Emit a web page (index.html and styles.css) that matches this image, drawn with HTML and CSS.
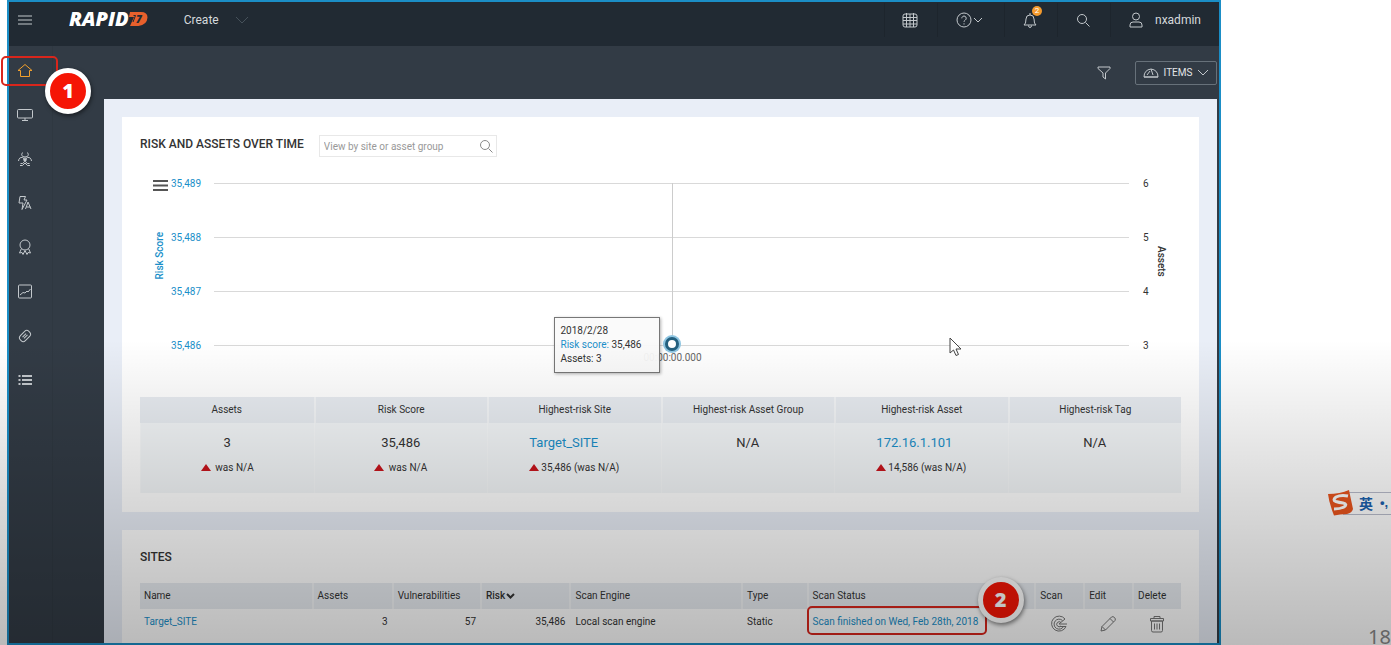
FILE: index.html
```html
<!DOCTYPE html>
<html lang="en">
<head>
  <meta charset="UTF-8">
  <title>Security Console</title>
  <meta name="viewport" content="width=device-width, initial-scale=1.0">
  <link rel="stylesheet" href="styles.css">
</head>
<body>
  <div class="app">
    <header class="topbar">
      <button class="menu-btn" aria-label="Menu">
        <svg class="icon" width="16" height="16" viewBox="0 0 16 16"><path d="M1 4h14M1 8h14M1 12h14"/></svg>
      </button>
      <a href="#" class="logo">RAPID<svg width="19" height="14" viewBox="0 0 19 14">
          <path d="M1 0h11q6.500 0 6.500 5.500Q18 13 9.500 14H1l4-9H0z" fill="#e8602c"/>
          <path d="M4.500 3.500h2L4 10" stroke="#212a33"/>
          <text x="7" y="11" class="logo-seven">7</text>
        </svg></a>
      <button class="create-btn">Create
        <svg class="icon dim" width="14" height="8" viewBox="0 0 14 8"><path d="M1 1l6 6 6-6"/></svg>
      </button>
      <nav class="tools">
        <button class="tool" aria-label="Calendar">
          <svg class="icon" width="16" height="16" viewBox="0 0 16 16"><rect x="1" y="2" width="14" height="13" rx="2"/><path d="M1 5.500h14M1 8.500h14M1 12h14M4.500 1v14M8 2v13M11.500 1v14"/></svg>
        </button>
        <button class="tool tool-help" aria-label="Help">
          <svg class="icon" width="27" height="16" viewBox="0 0 27 16"><circle cx="8" cy="8" r="7"/><path d="M5.800 6.300a2.200 2.200 0 1 1 3.400 1.800Q8 8.800 8 9.800M8 11.300v1.200M18 6l4 4 4-4"/></svg>
        </button>
        <button class="tool" aria-label="Notifications">
          <svg class="icon" width="16" height="16" viewBox="0 0 16 16"><path d="M2 13q2-1 2-6 0-4 4-4t4 4q0 5 2 6zM8 3V1M6.500 13.500q0 2 1.500 2t1.500-2"/></svg>
          <span class="count">2</span>
        </button>
        <button class="tool" aria-label="Search">
          <svg class="icon" width="14" height="14" viewBox="0 0 14 14"><circle cx="6" cy="6" r="4.500"/><path d="M9.500 9.500l4 4"/></svg>
        </button>
        <button class="tool tool-user">
          <svg class="icon" width="14" height="16" viewBox="0 0 14 16"><circle cx="7" cy="4.500" r="3.500"/><path d="M1 15v-2q0-3 3-3h6q3 0 3 3v2z"/></svg>
          nxadmin
        </button>
      </nav>
    </header>

    <div class="body">
      <nav class="sidebar">
        <a href="#" class="side-link active" aria-label="Home">
          <svg class="icon" width="16" height="16" viewBox="0 0 16 16"><path d="M1 7.500l7-6 7 6h-2.500v6h-9v-6z"/></svg>
          <span class="mark mark-home"></span>
          <span class="step step-one">1</span>
        </a>
        <a href="#" class="side-link" aria-label="Assets">
          <svg class="icon" width="16" height="16" viewBox="0 0 16 16"><rect x=".5" y="2.500" width="15" height="8.500" rx="1"/><path d="M8 11v2.500M5 13.500h6"/></svg>
        </a>
        <a href="#" class="side-link" aria-label="Vulnerabilities">
          <svg class="icon" width="16" height="16" viewBox="0 0 16 16"><path d="M5.500 1.500q-2.500 4 2.500 4.500 5-.5 2.500-4.500M1.500 10q.5-4 4-3.500 3 1 2 4-1.500 3-4 2M14.500 10q-.5-4-4-3.500-3 1-2 4 1.500 3 4 2M3 14.500h2.500L8 12l2.500 2.500H13"/><circle cx="8" cy="8.500" r="1.500"/></svg>
        </a>
        <a href="#" class="side-link" aria-label="Policies">
          <svg class="icon" width="16" height="16" viewBox="0 0 16 16"><path d="M3 1.500h5.500L7 5h3l-5 9.500 1-6.500H2zM8.500 14l2.500-7 3 7M9.500 12h4"/></svg>
        </a>
        <a href="#" class="side-link" aria-label="Goals">
          <svg class="icon" width="16" height="16" viewBox="0 0 16 16"><circle cx="8" cy="6" r="5"/><path d="M4.500 9.500L2.500 14l2.500-.5 1 2L8 11.500l2 4 1-2 2.500.5-2-4.500"/></svg>
        </a>
        <a href="#" class="side-link" aria-label="Reports">
          <svg class="icon" width="16" height="16" viewBox="0 0 16 16"><rect x="1.500" y="2" width="13" height="13" rx="1"/><path d="M3 12l3-2.500 2 .5 2-2 1 1 2.500-3"/></svg>
        </a>
        <a href="#" class="side-link" aria-label="Tickets">
          <svg class="icon" width="16" height="16" viewBox="0 0 16 16"><g transform="rotate(-45 8 9)"><rect x="2" y="5.500" width="12" height="7" rx="3"/><path d="M5.500 8h5M5.500 10h5"/></g></svg>
        </a>
        <a href="#" class="side-link" aria-label="Administration">
          <svg class="icon heavy" width="16" height="16" viewBox="0 0 16 16"><path d="M1.500 5h2M5 5h10M1.500 9h2M5 9h10M1.500 13h2M5 13h10"/></svg>
        </a>
      </nav>

      <main class="main">
        <div class="toolbar">
          <button class="filter-btn" aria-label="Filter">
            <svg class="icon" width="14" height="14" viewBox="0 0 14 14"><path d="M1 1h12v1.500L8.500 7v6L6 11V7L1 2.500z"/></svg>
          </button>
          <button class="items-btn">
            <svg class="icon" width="16" height="12" viewBox="0 0 16 12"><path d="M1 10q0-7 7-8 7 1 7 8zM8 2l2 6M4 8l3-4M1 10h14"/></svg>
            ITEMS
            <svg class="icon" width="12" height="8" viewBox="0 0 12 8"><path d="M1 1l5 5 5-5"/></svg>
          </button>
        </div>

        <div class="content">
          <section class="card">
            <div class="card-head">
              <h2>RISK AND ASSETS OVER TIME</h2>
              <div class="search">
                <input type="text" placeholder="View by site or asset group" aria-label="View by site or asset group">
                <svg width="14" height="14" viewBox="0 0 14 14"><circle cx="6" cy="6" r="4.500"/><path d="M9.500 9.500l4 4"/></svg>
              </div>
            </div>

            <div class="chart">
              <div class="axis-side">
                <button class="chart-menu" aria-label="Chart menu">
                  <svg width="15" height="13" viewBox="0 0 15 13"><path d="M0 2h15M0 6.500h15M0 11h15"/></svg>
                </button>
                <span class="axis-title axis-risk">Risk Score</span>
              </div>
              <div class="scale scale-risk">
                <span>35,489</span>
                <span>35,488</span>
                <span>35,487</span>
                <span>35,486</span>
              </div>
              <div class="plot">
                <div class="line"></div>
                <div class="line"></div>
                <div class="line"></div>
                <div class="line"></div>
                <div class="crosshair"></div>
                <div class="point"></div>
                <span class="time">00:00:00.000</span>
                <div class="tooltip">
                  <div>2018/2/28</div>
                  <div><span class="blue">Risk score:</span> 35,486</div>
                  <div>Assets: 3</div>
                </div>
                <svg class="pointer" width="14" height="20" viewBox="0 0 14 20"><path d="M1 1v15l3.500-3 2.500 5.500 2.500-1L7 12h5z"/></svg>
              </div>
              <div class="scale scale-assets">
                <span>6</span>
                <span>5</span>
                <span>4</span>
                <span>3</span>
              </div>
              <span class="axis-title axis-assets">Assets</span>
            </div>

            <table class="summary">
              <thead>
                <tr>
                  <th>Assets</th>
                  <th>Risk Score</th>
                  <th>Highest-risk Site</th>
                  <th>Highest-risk Asset Group</th>
                  <th>Highest-risk Asset</th>
                  <th>Highest-risk Tag</th>
                </tr>
              </thead>
              <tbody>
                <tr>
                  <td>
                    <div class="value">3</div>
                    <div class="delta"><i class="up"></i> was N/A</div>
                  </td>
                  <td>
                    <div class="value">35,486</div>
                    <div class="delta"><i class="up"></i> was N/A</div>
                  </td>
                  <td>
                    <div class="stat">
                      <a href="#" class="value">Target_SITE</a>
                      <div class="delta"><i class="up"></i>35,486 (was N/A)</div>
                    </div>
                  </td>
                  <td><div class="value">N/A</div></td>
                  <td>
                    <div class="stat">
                      <a href="#" class="value">172.16.1.101</a>
                      <div class="delta"><i class="up"></i>14,586 (was N/A)</div>
                    </div>
                  </td>
                  <td><div class="value">N/A</div></td>
                </tr>
              </tbody>
            </table>
          </section>

          <section class="card card-sites">
            <h2>SITES</h2>
            <table class="sites">
              <colgroup>
                <col class="c-name">
                <col class="c-assets">
                <col class="c-vulns">
                <col class="c-risk">
                <col class="c-engine">
                <col class="c-type">
                <col class="c-status">
                <col class="c-action">
                <col class="c-action">
                <col class="c-action">
              </colgroup>
              <thead>
                <tr>
                  <th>Name</th>
                  <th>Assets</th>
                  <th>Vulnerabilities</th>
                  <th class="sorted">Risk<svg width="9" height="6" viewBox="0 0 9 6"><path d="M1 1l3.500 3.500L8 1"/></svg></th>
                  <th>Scan Engine</th>
                  <th>Type</th>
                  <th>Scan Status</th>
                  <th>Scan</th>
                  <th>Edit</th>
                  <th>Delete</th>
                </tr>
              </thead>
              <tbody>
                <tr>
                  <td><a href="#">Target_SITE</a></td>
                  <td class="num">3</td>
                  <td class="num">57</td>
                  <td class="num">35,486</td>
                  <td>Local scan engine</td>
                  <td>Static</td>
                  <td class="status">
                    <a href="#">Scan finished on Wed, Feb 28th, 2018</a>
                    <span class="mark mark-status"></span>
                    <span class="step step-two">2</span>
                  </td>
                  <td class="action">
                    <button aria-label="Scan"><svg width="18" height="18" viewBox="0 0 18 18"><path d="M15 4A7.500 7.500 0 1 0 16 11.500H9.500M12.500 5.500A5 5 0 1 0 13.500 11.500M11 7.500a2.500 2.500 0 1 0 0 3.500M9 9h8M9 9l6-5"/></svg></button>
                  </td>
                  <td class="action">
                    <button aria-label="Edit"><svg width="18" height="18" viewBox="0 0 18 18"><path d="M2 16l1-4.500L12.500 2q1.500-1 3 .5t.5 3L6.500 15zM11 3.500l3.500 3.500M3 11.500L6.500 15"/></svg></button>
                  </td>
                  <td class="action">
                    <button aria-label="Delete"><svg width="18" height="18" viewBox="0 0 18 18"><path d="M3.500 6h11v9.500q0 1.500-1.500 1.500H5q-1.500 0-1.500-1.500zM2.500 3.500h13V6h-13zM6 3.500V1.500h6v2M6.500 8.500v6M9 8.500v6M11.500 8.500v6"/></svg></button>
                  </td>
                </tr>
              </tbody>
            </table>
          </section>
        </div>
      </main>
    </div>
  </div>

  <div class="ime">
    <svg width="28" height="28" viewBox="0 0 28 28">
      <path d="M1 5q12 0 21-4 1 5 4 19-1 4-6 5-7 0-13 1.500Q2 14 1 5z" fill="#e9541d"/>
      <path d="M21 7q-7-1.500-12 1-4 3 0 4.500 3 1 7 1.500 5 1 1 4-4 2-10 2" stroke="#fff" stroke-width="3"/>
    </svg>
    <span class="ime-lang" lang="zh">英</span>
    <span class="ime-punct">•,</span>
  </div>
  <span class="page-no">18</span>
  <div class="shade"></div>
</body>
</html>
```
FILE: styles.css
```css
* {
  box-sizing: border-box;
}

body {
  margin: 0;
  min-height: 100vh;
  position: relative;
  overflow: hidden;
  background: #fff;
  color: #333;
  font-family: Roboto, sans-serif;
  font-size: 10px;
  line-height: 14px;
}

button {
  padding: 0;
  border: 0;
  background: none;
  color: inherit;
  font: inherit;
}

a {
  color: #1a8fc9;
  text-decoration: none;
}

h2 {
  margin: 0;
  font-size: 12px;
  font-weight: 500;
  line-height: 18px;
}

svg {
  fill: none;
}

.icon {
  stroke: #c3c8cc;
  stroke-width: 1;
}

.icon.dim {
  stroke: #46515a;
}

.icon.heavy {
  stroke-width: 2;
}

.app {
  margin: 0 170px 0 7px;
  border: 2px solid #1b8ec6;
  background: #323b45;
}

/* top bar */

.topbar {
  display: flex;
  align-items: center;
  height: 44px;
  padding-bottom: 8px;
  background: #212a33;
  color: #d5d9dc;
  font-size: 12px;
}

.menu-btn {
  display: flex;
  justify-content: center;
  width: 32px;
}

.logo {
  display: flex;
  align-items: center;
  margin-left: 28px;
  padding-bottom: 2px;
  color: #fff;
  font-family: "Open Sans", sans-serif;
  font-size: 20px;
  font-style: italic;
  font-weight: 800;
}

.logo-seven {
  fill: #212a33;
  font-size: 10px;
}

.create-btn {
  display: flex;
  align-items: center;
  gap: 16px;
  margin-left: 36px;
}

.tools {
  display: flex;
  margin-left: auto;
}

.tool {
  position: relative;
  display: flex;
  align-items: center;
  justify-content: center;
  width: 53px;
  height: 34px;
  padding-right: 2px;
  border-left: 1px solid #1d252d;
}

.tool-help {
  width: 67px;
  padding-right: 4px;
}

.tool-user {
  gap: 12px;
  width: 109px;
  padding: 0;
}

.count {
  position: absolute;
  top: 3px;
  right: 15px;
  width: 10px;
  height: 10px;
  border-radius: 50%;
  background: #f39a2d;
  color: #fff;
  font-size: 8px;
  line-height: 10px;
}

/* side menu */

.body {
  display: flex;
}

.sidebar {
  display: flex;
  flex-direction: column;
  flex: none;
  width: 44px;
  padding-top: 3px;
  border-right: 1px solid #2f3841;
}

.side-link {
  position: relative;
  display: flex;
  align-items: center;
  height: 44px;
  padding-left: 8px;
}

.side-link.active .icon {
  stroke: #f2a02c;
}

/* numbered marks */

.mark {
  position: absolute;
  border: 2px solid #d9261c;
  border-radius: 5px;
}

.mark-home {
  top: 7px;
  left: -8px;
  width: 57px;
  height: 30px;
}

.step {
  position: absolute;
  z-index: 2;
  width: 46px;
  height: 46px;
  border: 5px solid #fff;
  border-radius: 50%;
  background: #f51505;
  box-shadow: 1px 2px 4px rgba(0, 0, 0, 0.5);
  color: #fff;
  font-family: "Open Sans", sans-serif;
  font-size: 20px;
  font-weight: 800;
  line-height: 36px;
  text-align: center;
}

.step-one {
  top: 19px;
  left: 36px;
}

/* main area */

.main {
  flex: 1;
  min-width: 0;
  padding: 0 2px 0 51px;
}

.toolbar {
  display: flex;
  align-items: center;
  justify-content: flex-end;
  gap: 24px;
  height: 53px;
}

.filter-btn {
  display: flex;
}

.items-btn {
  display: flex;
  align-items: center;
  justify-content: center;
  gap: 5px;
  width: 82px;
  height: 24px;
  border: 1px solid #67717a;
  border-radius: 2px;
  color: #e2e5e7;
}

.content {
  display: flex;
  flex-direction: column;
  gap: 18px;
  padding: 18px 18px 0;
  background: #e9eef7;
}

.card {
  padding: 18px 18px 19px;
  background: #fff;
}

.card-head {
  display: flex;
  gap: 15px;
}

.search {
  position: relative;
  width: 178px;
}

.search input {
  display: block;
  width: 100%;
  height: 22px;
  padding: 0 24px 0 4px;
  border: 1px solid #e8e8e8;
  color: #333;
  font: inherit;
}

.search input::placeholder {
  color: #999;
}

.search svg {
  position: absolute;
  top: 4px;
  right: 4px;
  stroke: #8a8a8a;
}

/* chart */

.chart {
  display: flex;
  height: 216px;
  margin-bottom: 24px;
}

.axis-side {
  display: flex;
  flex-direction: column;
  align-items: center;
  gap: 40px;
  width: 16px;
  margin-left: 12px;
  padding-top: 22px;
}

.chart-menu {
  display: flex;
}

.chart-menu svg {
  stroke: #555;
  stroke-width: 2;
}

.axis-title {
  font-size: 10px;
  font-weight: 500;
  line-height: 14px;
  writing-mode: vertical-rl;
}

.axis-risk {
  color: #1a8fc9;
  transform: rotate(180deg);
}

.axis-assets {
  margin-right: 13px;
  padding-top: 89px;
}

.scale {
  display: flex;
  flex-direction: column;
}

.scale span {
  height: 54px;
  line-height: 54px;
}

.scale-risk {
  width: 46px;
  padding-left: 3px;
  color: #1a8fc9;
}

.scale-assets {
  width: 25px;
  padding-left: 14px;
}

.plot {
  position: relative;
  flex: 1;
}

.line {
  height: 54px;
  padding-top: 26px;
}

.line::before {
  content: "";
  display: block;
  border-top: 1px solid #d9d9d9;
}

.crosshair {
  position: absolute;
  top: 26px;
  left: 50%;
  height: 162px;
  border-left: 1px solid #ccc;
}

.point {
  position: absolute;
  top: 180px;
  left: 50%;
  width: 14px;
  height: 14px;
  margin-left: -7px;
  border: 3px solid #24607f;
  border-radius: 50%;
  background: #fff;
  box-shadow: 0 0 0 2px #8fc6e2;
}

.time {
  position: absolute;
  top: 194px;
  left: 50%;
  margin-left: -28px;
  color: #666;
}

.tooltip {
  position: absolute;
  top: 160px;
  right: 50%;
  width: 106px;
  margin-right: 12px;
  padding: 6px;
  border: 1px solid #777;
  background: rgba(250, 250, 250, 0.95);
  box-shadow: 1px 1px 3px rgba(0, 0, 0, 0.3);
}

.blue {
  color: #1a8fc9;
}

.pointer {
  position: absolute;
  top: 180px;
  left: 80%;
  margin-left: 3px;
  fill: #fff;
  stroke: #444;
}

/* tables */

table {
  width: 100%;
  border-spacing: 0;
  table-layout: fixed;
}

th {
  height: 26px;
  padding: 0;
  border-left: 2px solid #f3f5f7;
  background: #e8ecf1;
  font-weight: 400;
}

th:first-child {
  border-left: 0;
}

.summary td {
  height: 70px;
  padding: 10px 0 0;
  border-left: 1px solid #f7f9fa;
  background: #f3f6f8;
  text-align: center;
  vertical-align: top;
}

.value {
  display: block;
  font-size: 13px;
  line-height: 20px;
}

.stat {
  display: inline-block;
  text-align: left;
}

.delta {
  margin-top: 8px;
}

.up {
  display: inline-block;
  margin-right: 2px;
  border-right: 5px solid transparent;
  border-bottom: 7px solid #c8141c;
  border-left: 5px solid transparent;
}

.card-sites {
  padding-bottom: 8px;
}

.card-sites h2 {
  margin-bottom: 17px;
}

.sites th,
.sites td {
  padding: 0 4px;
  text-align: left;
  white-space: nowrap;
}

.sites td {
  height: 26px;
}

.sites td + td {
  padding-left: 6px;
}

.sites .num {
  text-align: right;
}

.sites .sorted {
  font-weight: 500;
}

.sorted svg {
  margin-left: 1px;
  stroke: #333;
  stroke-width: 2;
}

.sites .action {
  padding: 4px 0 0;
  text-align: center;
}

.action button {
  display: flex;
  margin: 0 auto;
}

.action svg {
  stroke: #777;
}

.c-name { width: 16.5%; }
.c-assets { width: 7.7%; }
.c-vulns { width: 8.5%; }
.c-risk { width: 8.6%; }
.c-engine { width: 16.5%; }
.c-type { width: 6.3%; }
.c-status { width: 21.9%; }
.c-action { width: 4.7%; }

.status {
  position: relative;
}

.mark-status {
  top: -3px;
  left: 0;
  width: 180px;
  height: 29px;
}

.step-two {
  top: -32px;
  left: 171px;
}

/* input method bar and page number on the right */

.ime {
  position: absolute;
  top: 489px;
  right: 0;
  display: flex;
  align-items: center;
  gap: 4px;
  width: 64px;
  color: #1c62ae;
  font-family: "Noto Sans CJK SC", sans-serif;
  font-size: 14px;
  font-weight: 700;
  white-space: nowrap;
}

.ime::before {
  content: "";
  position: absolute;
  top: 3px;
  right: 0;
  bottom: 2px;
  left: 16px;
  border: solid #b9bccb;
  border-width: 1px 0;
}

.ime svg {
  position: relative;
  flex: none;
}

.ime-punct {
  margin-left: 3px;
  font-family: "Liberation Sans", sans-serif;
  font-size: 13px;
}

.page-no {
  position: absolute;
  right: 0;
  bottom: -6px;
  color: #888;
  font-family: "Noto Sans", sans-serif;
  font-size: 20px;
  line-height: 28px;
}

.shade {
  position: absolute;
  right: 0;
  bottom: 0;
  left: 0;
  z-index: 5;
  height: 305px;
  background: linear-gradient(rgba(0, 0, 0, 0), rgba(0, 0, 0, 0.15) 52%, rgba(0, 0, 0, 0.27));
  pointer-events: none;
}
```
